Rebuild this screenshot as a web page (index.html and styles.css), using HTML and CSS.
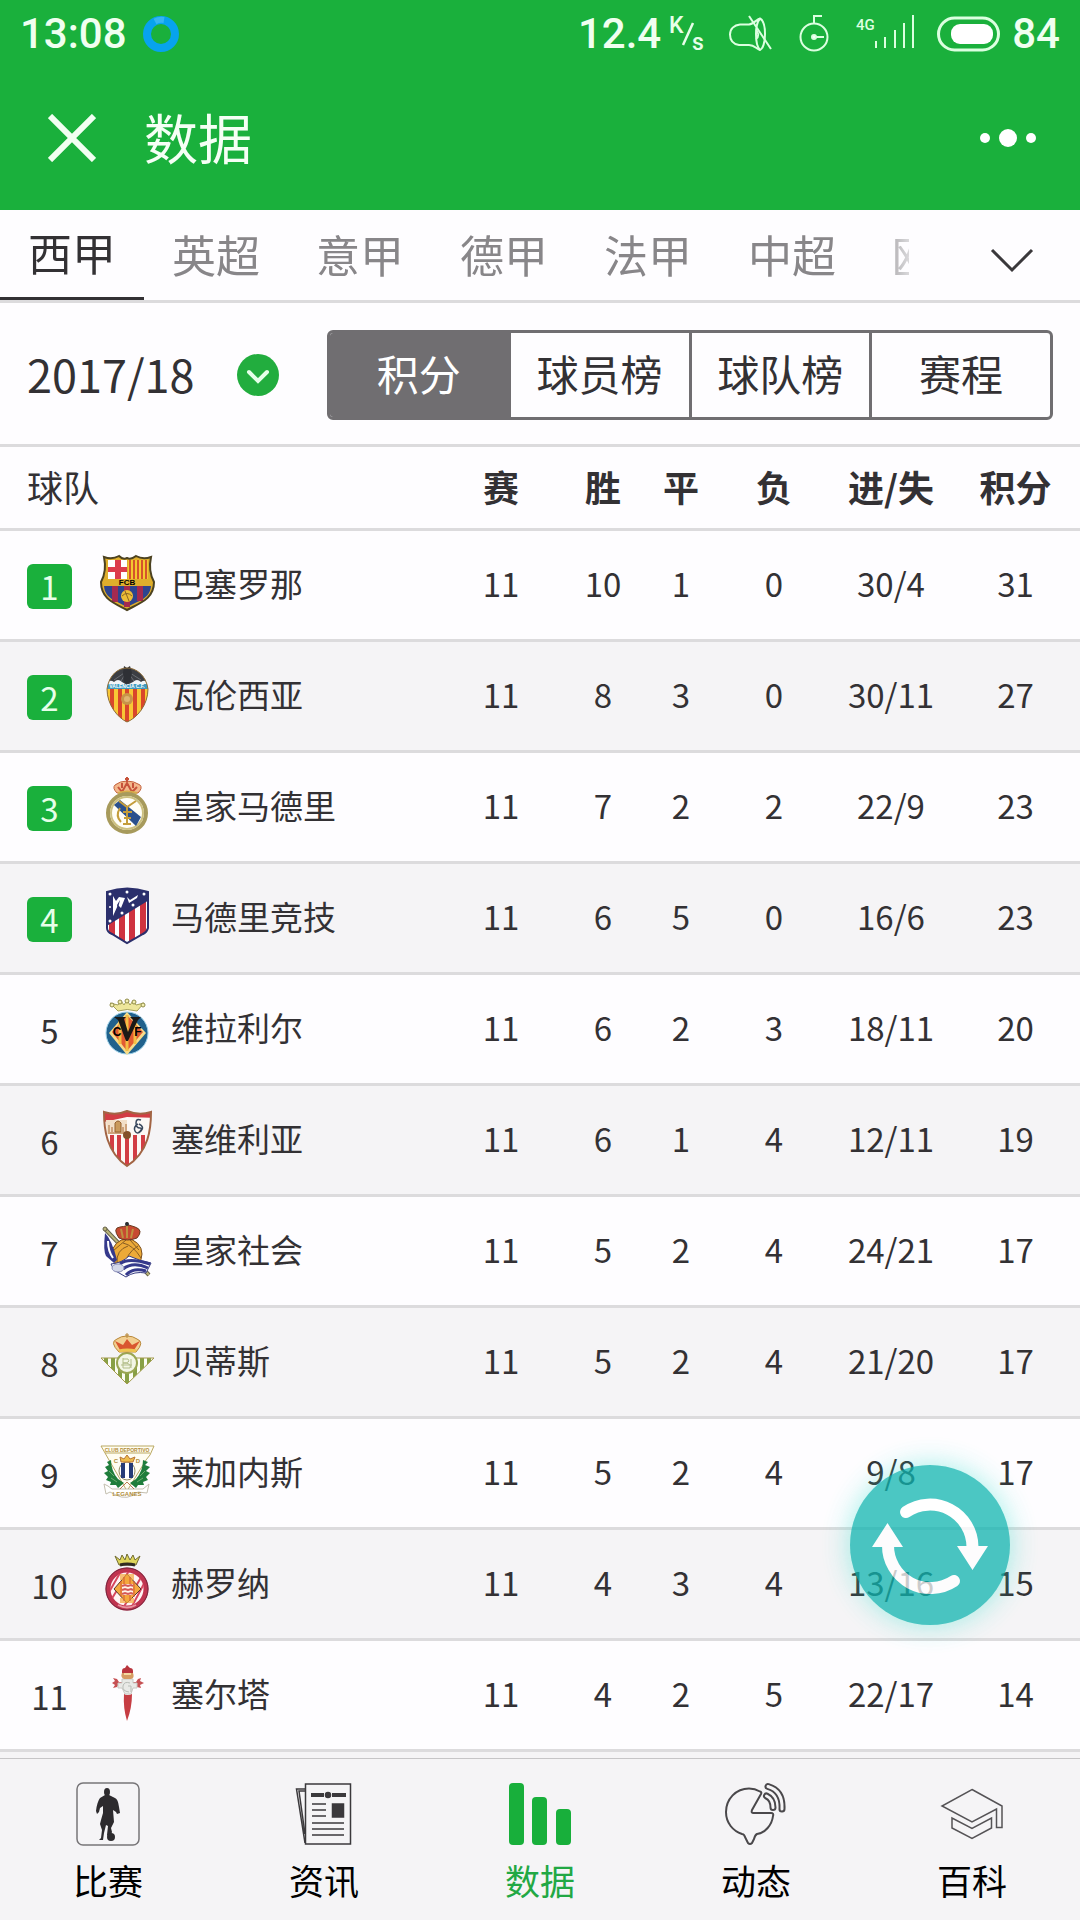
FILE: index.html
```html
<!DOCTYPE html>
<html lang="zh-CN">
<head>
  <meta charset="UTF-8" />
  <meta name="viewport" content="width=device-width, initial-scale=1" />
  <title>数据</title>
  <link rel="stylesheet" href="styles.css">
</head>
<body>

  <div class="status-bar">
    <span>13:08</span>
    <svg class="ring" width="38" height="38" viewBox="0 0 38 38"><circle cx="19" cy="19" r="14" fill="none" stroke="#07a3ee" stroke-width="8"/><path d="M13 6.500A14 14 0 0 1 22 5" fill="none" stroke="#35b5f2" stroke-width="6"/></svg>
    <div class="status-right">
      <div class="speed">
        <span>12.4</span>
        <svg width="38" height="48" viewBox="0 -6 38 48"><text x="0" y="17" class="unit">K</text><path d="M14 29 24 7" stroke="#e6ffe9" stroke-width="2.500"/><text x="23" y="34" class="unit">s</text></svg>
      </div>
      <svg width="44" height="38" viewBox="0 0 44 38" fill="none" stroke="#dcffe0" stroke-width="2"><path d="M20 30H10C4 29 1 25 1 19.500S5 10 11 9.500H20C25 9 28 4 31 3.500C34 5 36 11 36 19S34 34 31 35C27 34 26 30 20 30"/><path d="M31 3.500C28 7 27 12 27 19S28 32 31 35M20 1 42 34"/><path d="M27 15c3 2 3 7 0 9"/></svg>
      <svg width="38" height="38" viewBox="0 0 38 38" fill="none" stroke="#dcffe0" stroke-width="2"><circle cx="19" cy="22" r="13.500"/><path d="M19 9V1H27M19 22H29"/><circle cx="19" cy="22" r="2" fill="#fff"/></svg>
      <svg width="60" height="38" viewBox="0 0 60 38"><text x="1" y="15" class="net">4G</text><path d="M21 33V26M30 33V22M40 33V15M49 33V8M58 33V0" stroke="#dcffe0" stroke-width="2"/></svg>
      <div class="battery">
        <svg width="63" height="36" viewBox="0 0 63 36"><rect x="1.500" y="2" width="60" height="32" rx="16" fill="none" stroke="#dcffe0" stroke-width="3"/><rect x="14" y="8" width="42" height="20" rx="9" fill="#fff"/></svg>
        <span>84</span>
      </div>
    </div>
  </div>

  <header class="header">
    <button class="icon-btn" aria-label="关闭"><svg width="48" height="48" viewBox="0 0 48 48"><path d="M2 2 46 46M46 2 2 46" stroke="#f2fff2" stroke-width="6"/></svg></button>
    <h1>数据</h1>
    <button class="icon-btn" aria-label="更多"><svg width="56" height="20" viewBox="0 0 56 20" fill="#fff"><circle cx="5" cy="10" r="5"/><circle cx="28" cy="10" r="9"/><circle cx="51" cy="10" r="5"/></svg></button>
  </header>

  <nav class="leagues">
    <div class="tabs">
      <button class="tab active">西甲</button>
      <button class="tab">英超</button>
      <button class="tab">意甲</button>
      <button class="tab">德甲</button>
      <button class="tab">法甲</button>
      <button class="tab">中超</button>
      <button class="tab">欧冠</button>
    </div>
    <button class="expand" aria-label="展开"><svg width="44" height="26" viewBox="0 0 44 26"><path d="M2 2 22 22 42 2" fill="none" stroke="#3a383b" stroke-width="3"/></svg></button>
  </nav>

  <div class="filter">
    <label class="season">
      <select aria-label="赛季"><option>2017/18</option></select>
      <svg width="42" height="42" viewBox="0 0 42 42"><circle cx="21" cy="21" r="21" fill="#22ad3e"/><path d="M12 18 21 27 30 18" fill="none" stroke="#e6ffe9" stroke-width="4" stroke-linecap="round"/></svg>
    </label>
    <div class="segment">
      <button class="active">积分</button>
      <button>球员榜</button>
      <button>球队榜</button>
      <button>赛程</button>
    </div>
  </div>

  <table class="standings">
    <colgroup>
      <col><col class="c-played"><col class="c-win"><col class="c-draw"><col class="c-loss"><col class="c-goals"><col class="c-points">
    </colgroup>
    <thead>
      <tr><th>球队</th><th>赛</th><th>胜</th><th>平</th><th>负</th><th>进/失</th><th>积分</th></tr>
    </thead>
    <tbody>
      <tr>
        <td><div class="team"><span class="rank top">1</span>
          <svg class="crest" viewBox="0 0 56 56">
            <clipPath id="barca"><path d="M4 2Q12 5 19 1 23 5 27 3 31 5 36 1 43 5 51 2Q48 16 54 27C54 44 40 48 27 55C14 48 1 44 1 27Q7 16 4 2Z"/></clipPath>
            <g clip-path="url(#barca)">
              <path fill="#dfae2c" d="M0 0h56v56H0z"/>
              <path fill="#fff" d="M8 5h19v19H8z"/><path fill="#dc3c4b" d="M15 5h6v19h-6zM8 12h19v5H8z"/>
              <path fill="#f4c92f" d="M28 5h20v19H28z"/><path d="M30 5v19M34 5v19M38 5v19M42 5v19M46 5v19" stroke="#d5532c" stroke-width="2"/>
              <path fill="#2d448f" d="M4 31h47c-1 13-13 15-24 21C17 46 5 44 4 31z"/>
              <path d="M15 31v16M27 31v21M40 31v15" stroke="#a32a50" stroke-width="6"/>
            </g>
            <circle cx="27" cy="41" r="6" fill="#edbd36"/><path d="M22 41q5-5 10 0M25 36l4 10" fill="none" stroke="#8b6424"/>
            <path d="M4 2Q12 5 19 1 23 5 27 3 31 5 36 1 43 5 51 2Q48 16 54 27C54 44 40 48 27 55C14 48 1 44 1 27Q7 16 4 2Z" fill="none" stroke="#4c4221" stroke-width="2"/>
            <text x="27" y="30" class="crest-text fcb">FCB</text>
          </svg>巴塞罗那</div></td>
        <td>11</td><td>10</td><td>1</td><td>0</td><td>30/4</td><td>31</td>
      </tr>
      <tr>
        <td><div class="team"><span class="rank top">2</span>
          <svg class="crest" viewBox="0 0 56 56">
            <clipPath id="valencia"><path d="M7 23C9 9 18 2 27 2S46 9 48 23C48 39 37 52 27 56C18 52 7 39 7 23Z"/></clipPath>
            <g clip-path="url(#valencia)">
              <path fill="#f8c735" d="M0 0h56v56H0z"/>
              <path d="M12 22v34M20 22v34M27 22v34M35 22v34M43 22v34" stroke="#d9462b" stroke-width="4"/>
              <path fill="#f2f5f7" d="M0 0h56v18H0z"/><path fill="#3e9bc0" d="M0 18h56v5H0z"/>
              <path fill="#3c3e43" d="M0 0H56V17L48 17Q45 13 41 16 37 12 33 16L27 19 22 16Q18 12 14 16 10 13 7 17L0 17Z"/>
              <path d="M27 5 14 14M27 5 41 14M27 5 21 15M27 5 34 15" stroke="#6a6d73"/>
            </g>
            <path fill="#2e3035" d="M24 0 27 2 30 0 32 7 30 16 27 18 24 16 23 7Z"/>
            <circle cx="27" cy="33" r="6" fill="#c89448"/><circle cx="27" cy="33" r="3" fill="#e0b470"/>
            <path d="M7 23C9 9 18 2 27 2S46 9 48 23C48 39 37 52 27 56C18 52 7 39 7 23Z" fill="none" stroke="#8c6c3c"/>
            <text x="27" y="22" class="crest-text small white">VALENCIA C.F.</text>
          </svg>瓦伦西亚</div></td>
        <td>11</td><td>8</td><td>3</td><td>0</td><td>30/11</td><td>27</td>
      </tr>
      <tr>
        <td><div class="team"><span class="rank top">3</span>
          <svg class="crest" viewBox="0 0 56 56">
            <path d="M17 16Q12 11 15 8 20 4 27 4T40 8Q43 11 38 16Z" fill="#f3b78c" stroke="#c2623f"/><path d="M18 10 22 15 27 6 32 15 37 10M22 6v5M33 6v5M27 0v5M25 2h4" stroke="#c7533b" stroke-width="2" fill="none"/><path d="M18 16q9-3 19 0" stroke="#d6ad4a" stroke-width="2" fill="none"/>
            <circle cx="27" cy="36" r="19" fill="#fffef7" stroke="#a79a5c" stroke-width="4"/><circle cx="27" cy="36" r="16" fill="none" stroke="#ccc080" stroke-width="2"/>
            <path d="M14 28 20 23 41 40 36 49Z" fill="#2a508d"/>
            <path d="M19 24 27 30 36 24M27 30v18M23 47h8M23 35h9M24 41h7M20 31q-5 8 1 14" fill="none" stroke="#c49d3b" stroke-width="2"/>
          </svg>皇家马德里</div></td>
        <td>11</td><td>7</td><td>2</td><td>2</td><td>22/9</td><td>23</td>
      </tr>
      <tr>
        <td><div class="team"><span class="rank top">4</span>
          <svg class="crest" viewBox="0 0 56 56">
            <clipPath id="atleti"><path d="M7 4Q27-3 48 4V40Q47 44 43 46L27 55 12 46Q7 44 7 40Z"/></clipPath>
            <g clip-path="url(#atleti)">
              <path fill="#fff" d="M0 0h56v56H0z"/>
              <path d="M12 20v36M22 20v36M32 10v46M43 10v46" stroke="#cf3340" stroke-width="6"/>
              <path fill="#2b2f6c" d="M0 0h56v8L0 42z"/>
            </g>
            <path d="M13 28 13 8 16 13 19 9 25 10 21 20 18 17ZM27 9 30 12 38 7 37 10 29 15Z" fill="#fff"/>
            <path d="M17 17 20 12 18 20Z" fill="#2b2f6c"/>
            <g fill="#fff"><circle cx="27" cy="4" r="1.500"/><circle cx="10" cy="6" r="1.500"/><circle cx="44" cy="6" r="1.500"/><circle cx="33" cy="17" r="1.500"/><circle cx="22" cy="25" r="1.500"/><circle cx="10" cy="33" r="1.500"/><circle cx="10" cy="19" r="1"/></g>
            <path d="M7 4Q27-3 48 4V40Q47 44 43 46L27 55 12 46Q7 44 7 40Z" fill="none" stroke="#2b2f6c" stroke-width="2"/>
          </svg>马德里竞技</div></td>
        <td>11</td><td>6</td><td>5</td><td>0</td><td>16/6</td><td>23</td>
      </tr>
      <tr>
        <td><div class="team"><span class="rank">5</span>
          <svg class="crest" viewBox="0 0 56 56">
            <circle cx="27" cy="34" r="21" fill="#21618c" stroke="#9cd0e8"/>
            <path d="M27 13 46 34 27 56 9 34Z" fill="#f6dc8b"/><path d="M27 16 43 33 27 52 12 33Z" fill="#e35b32"/><path d="M27 16v36M20 22v23M35 22v23" stroke="#f4bf45" stroke-width="3"/>
            <path d="M18 12Q27 9 37 12L44 4 36 6 33 2 30 6 27 1 24 6 21 2 18 6 10 4Z" fill="#ede69b" stroke="#a4a057"/>
            <g fill="#f3eeb0" stroke="#8e8a48"><circle cx="12" cy="6" r="2"/><circle cx="20" cy="3" r="2"/><circle cx="27" cy="2" r="2"/><circle cx="34" cy="3" r="2"/><circle cx="43" cy="6" r="2"/></g>
            <path d="M14 18h12l-2 2 4 13 5-12-3-3h11l-3 3-10 21h-2L18 21z" fill="#1b1916"/>
            <text x="17" y="37" class="crest-text cvf">C</text><text x="38" y="37" class="crest-text cvf">F</text>
          </svg>维拉利尔</div></td>
        <td>11</td><td>6</td><td>2</td><td>3</td><td>18/11</td><td>20</td>
      </tr>
      <tr>
        <td><div class="team"><span class="rank">6</span>
          <svg class="crest" viewBox="0 0 56 56">
            <clipPath id="sevilla"><path d="M4 2Q16 6 27 1 39 6 51 2C51 18 49 42 27 56C6 42 4 18 4 2Z"/></clipPath>
            <g clip-path="url(#sevilla)">
              <path fill="#fcf8f5" d="M0 0h56v56H0z"/><path fill="#d23d44" d="M0 0h56v8L27 7 0 13z"/>
              <path d="M12 25v31M19 25v31M27 25v31M35 25v31M43 25v31" stroke="#d23d44" stroke-width="4"/>
              <path d="M6 10h21v14H7z" fill="#f2dfc8"/>
            </g>
            <path d="M9 22v-7M12 22v-5M23 22v-5M26 21v-7M8 23h17" stroke="#a9672f"/>
            <path d="M15 13q3-4 6 0v9h-6z" fill="#c99a5c" stroke="#94602f"/>
            <path d="M41 10q-5-2-5 3t4 5-2 5M38 14q-5 3-3 7t6 0-2-7" fill="none" stroke="#38475c" stroke-width="1.500"/>
            <circle cx="27" cy="25" r="4" fill="#84512b"/>
            <path d="M4 2Q16 6 27 1 39 6 51 2C51 18 49 42 27 56C6 42 4 18 4 2Z" fill="none" stroke="#a26444" stroke-width="2"/>
          </svg>塞维利亚</div></td>
        <td>11</td><td>6</td><td>1</td><td>4</td><td>12/11</td><td>19</td>
      </tr>
      <tr>
        <td><div class="team"><span class="rank">7</span>
          <svg class="crest" viewBox="0 0 56 56">
            <path d="M5 8 49 54" stroke="#656048" stroke-width="4"/><path d="M5 8 49 54" stroke="#b9b479" stroke-width="2"/><circle cx="5" cy="8" r="2" fill="#b9b479" stroke="#656048"/>
            <circle cx="27" cy="33" r="15" fill="#ecaa38" stroke="#7b4f20"/>
            <path d="M13 30q8-7 13-11M17 42q-1-13 11-17M26 45q-1-12 12-20M23 22q10 2 18 15M30 19l9 10" fill="none" stroke="#865c24"/>
            <path d="M19 17Q12 7 20 6T27 4 35 6 37 17Q27 21 19 17Z" fill="#c74a31" stroke="#6b3b20"/><path d="M27 1v16M21 8l2 9M33 8l-2 9" stroke="#bf9140" stroke-width="2"/><circle cx="27" cy="3" r="2" fill="#272c32"/>
            <path d="M5 12Q3 30 6 35L14 42 17 39Q12 19 5 12Z" fill="#35398c"/><path d="M8 20Q8 30 13 37" fill="none" stroke="#fff" stroke-width="2"/>
            <path d="M11 43Q22 42 29 35 40 40 51 42L46 52Q34 50 26 56L14 49Z" fill="#fff" stroke="#373c82"/>
            <path d="M20 43Q28 36 50 43M23 48Q33 40 48 47M26 54Q33 46 46 50" fill="none" stroke="#35398c" stroke-width="3"/><ellipse cx="18" cy="47" rx="6" ry="4" fill="#d4d8ea" stroke="#8a8eb7"/>
          </svg>皇家社会</div></td>
        <td>11</td><td>5</td><td>2</td><td>4</td><td>24/21</td><td>17</td>
      </tr>
      <tr>
        <td><div class="team"><span class="rank">8</span>
          <svg class="crest" viewBox="0 0 56 56">
            <clipPath id="betis"><path d="M1 26H54L27 52Z"/></clipPath>
            <g clip-path="url(#betis)"><path fill="#fcfdf4" d="M0 20h56v36H0z"/><path d="M6 24v30M13 24v30M20 24v30M27 24v30M35 24v30M42 24v30M49 24v30" stroke="#88a045" stroke-width="4"/></g>
            <path d="M1 26H54L27 52Z" fill="none" stroke="#a39a4d"/>
            <circle cx="27" cy="31" r="10" fill="#f3f6e6" stroke="#9aa653" stroke-width="2"/><path d="M23 26v10M23 27h5q3 4-5 4 9 0 7 5h-7M31 27v9M21 33h11" stroke="#b2bd89" fill="none"/>
            <path d="M19 20Q9 10 17 7 21 4 27 4T37 7Q45 10 36 20Z" fill="#f2cf91" stroke="#b88739"/><path d="M20 18 15 9 23 13 27 7 32 13 40 9 34 18Z" fill="#d9562f"/><path d="M27 1v5M25 3h4" stroke="#b88739"/><path d="M19 19q8-2 17 0" stroke="#edc551" stroke-width="3" fill="none"/>
          </svg>贝蒂斯</div></td>
        <td>11</td><td>5</td><td>2</td><td>4</td><td>21/20</td><td>17</td>
      </tr>
      <tr>
        <td><div class="team"><span class="rank">9</span>
          <svg class="crest" viewBox="0 0 56 56">
            <path d="M1 3H54L50 12 46 17 27 48 9 17 5 10Z" fill="#fffdf2" stroke="#bba963"/><path d="M5 10H50" stroke="#bba963"/>
            <path d="M4 41 8 43 12 46 43 46 49 41 47 50 38 49Q27 58 16 52L10 49 6 51Z" fill="#fff" stroke="#c4bfb0"/>
            <g fill="#1f7d3c"><path d="M11 17 7 19 9 22 5 24 8 28 4 30 8 34 6 37 11 39 10 42 16 42 18 45 24 40 18 36Q11 28 11 17Z"/><path d="M43 17 48 19 45 22 50 24 46 28 50 30 46 34 48 37 43 39 44 42 38 42 36 45 30 40 36 36Q43 28 43 17Z"/></g>
            <path d="M9 28l5 5M11 35l6 4M45 28l-5 5M43 35l-6 4" stroke="#6dae70"/>
            <ellipse cx="27" cy="28" rx="8" ry="9" fill="#fff" stroke="#8f8960"/><path d="M23 20v15M31 20v15" stroke="#263b78" stroke-width="4"/>
            <path d="M21 19 20 14 24 16 27 12 30 16 35 14 33 19Z" fill="#edbc4c" stroke="#b87537"/><path d="M27 39 20 46M27 39 34 46" stroke="#bb7c54"/>
            <text x="27" y="9" class="crest-text small gold">CLUB DEPORTIVO</text><text x="16" y="20" class="crest-text gold">C</text><text x="38" y="20" class="crest-text gold">D</text><text x="27" y="53" class="crest-text gold">LEGANES</text>
          </svg>莱加内斯</div></td>
        <td>11</td><td>5</td><td>2</td><td>4</td><td>9/8</td><td>17</td>
      </tr>
      <tr>
        <td><div class="team"><span class="rank">10</span>
          <svg class="crest" viewBox="0 0 56 56">
            <path d="M19 11 15 2 20 6 22 1 25 6 27 0 30 6 33 1 35 6 40 2 36 11Z" fill="#dfd65b" stroke="#716c32"/><path d="M20 11q7-2 15 0" stroke="#302b22" stroke-width="3" fill="none"/>
            <circle cx="27" cy="35" r="19" fill="#fff4f4" stroke="#c03450" stroke-width="5"/>
            <clipPath id="girona"><circle cx="27" cy="35" r="17"/></clipPath>
            <g clip-path="url(#girona)"><path d="M5 32 15 12M8 40 24 12M11 46 32 12M22 56 43 20M29 58 47 24M36 58 52 28" stroke="#d7485f" stroke-width="2"/></g>
            <path d="M27 20 41 35 27 49 14 35Z" fill="#f4a83e" stroke="#56362c"/><path d="M20 20h14v6H20zM20 44h14v5H20z" fill="#f4a83e" opacity=".7"/><path d="M21 27v16M24 23v24M30 23v24M34 27v16" stroke="#d55630"/><path d="M22 30h11v11H22z" fill="#fff4e9"/><path d="M22 32l3-1 3 1 3-1 2 1M22 36l3-1 3 1 3-1 2 1M22 40l3-1 3 1 3-1 2 1" stroke="#d55a58" fill="none" stroke-width="2"/>
            <path d="M18 51q9 5 18 0" fill="none" stroke="#e893a0" stroke-width="2"/>
            <circle cx="27" cy="35" r="21" fill="none" stroke="#762940"/>
          </svg>赫罗纳</div></td>
        <td>11</td><td>4</td><td>3</td><td>4</td><td>13/16</td><td>15</td>
      </tr>
      <tr>
        <td><div class="team"><span class="rank">11</span>
          <svg class="crest" viewBox="0 0 56 56">
            <path d="M24 29Q27 31 32 29 32 43 27 56 23 43 24 29Z" fill="#c63d43"/>
            <path d="M12 18 15 16 13 13 17 14 19 17 36 17 38 14 41 13 40 16 44 18 40 20 41 23 37 22 35 19H19L17 22 13 23 15 20Z" fill="#c65053"/>
            <path d="M22 14h11v4h4v5h-4l-2 6h-6l-3-6h-4v-5h4z" fill="#e9eae7" stroke="#c8cac5"/><path d="M30 18q-6-2-7 3t6 6M28 21h3v6" stroke="#b9bdb7" fill="none"/>
            <path d="M22 6Q22 3 25 3L27 0 30 3Q33 3 33 6V9H22Z" fill="#b9343d"/><path d="M22 8h11q2 5-2 6h-7q-4-2-2-6z" fill="#d69c62"/><path d="M24 9h7" stroke="#f3d9a0" stroke-width="2"/>
          </svg>塞尔塔</div></td>
        <td>11</td><td>4</td><td>2</td><td>5</td><td>22/17</td><td>14</td>
      </tr>
    </tbody>
  </table>

  <button class="refresh" aria-label="刷新">
    <svg width="160" height="160" viewBox="0 0 160 160">
      <g fill="none" stroke="#fff" stroke-width="12" stroke-linecap="round"><path d="M56 47A42.500 42.500 0 0 1 122.500 82"/><path d="M104 116A42.500 42.500 0 0 1 38 80"/></g>
      <path d="M107 81H138L122.500 105ZM22 82H53L37.500 58Z" fill="#fff"/>
    </svg>
  </button>

  <nav class="bottom-nav">
    <a href="#match">
      <svg width="64" height="64" viewBox="0 0 64 64"><rect x="1" y="1" width="62" height="62" rx="6" fill="none" stroke="#777578" stroke-width="1.500"/><g fill="#2d2b2e"><ellipse cx="31" cy="10" rx="3" ry="4"/><path d="M29 13 24 16Q21 20 20 29L21 32 23 30 24 26 27 24 27 31 25 38 24 42 26 48 25 56 23 58 27 58 28 51 30 43 32 44 31 53 34 56 36 50 35 46 38 40 37 28 40 30 41 32 44 31 43 25Q42 17 39 16L33 13Z"/><circle cx="35" cy="55" r="4"/></g></svg>
      <span>比赛</span>
    </a>
    <a href="#news">
      <svg width="64" height="64" viewBox="0 0 64 64" fill="none" stroke="#3b393c" stroke-width="1.500"><rect x="13.500" y="2" width="45" height="60"/><path d="M13 7H4.500L13 61M13 9H7L13 52"/><path d="M19 13H32M40 13H54" stroke-width="4"/><circle cx="36" cy="13" r="2.500" fill="#3b393c"/><path d="M20 22H34M20 28H34M20 34H34M20 41H52M20 47H52M20 53H52"/><rect x="40.500" y="22" width="11" height="13" fill="#3b393c"/></svg>
      <span>资讯</span>
    </a>
    <a href="#data" class="active">
      <svg width="64" height="64" viewBox="0 0 64 64" fill="#18af3b"><rect x="1" y="1" width="15" height="62" rx="4"/><rect x="24" y="15" width="15" height="48" rx="4"/><rect x="48" y="27" width="15" height="36" rx="4"/></svg>
      <span>数据</span>
    </a>
    <a href="#feed">
      <svg width="64" height="64" viewBox="0 0 64 64" fill="none" stroke="#4a484b" stroke-width="2" stroke-linejoin="round" stroke-linecap="round"><path d="M36 9.500Q38 10 37 12L28 28Q27 31 29 31H47Q50 31 49 34C48 43 41 51 33 52Q31 53 30 57L28 61Q26 63 24 61L21 55Q20 52 18 52C9 49 2 41 2 30C2 17 12 6.500 25 6.500Q31 6.500 36 9.500Z"/><path d="M44 4.500Q59 9 58 27M42.500 14Q49 17 49 25.500" stroke-width="7"/><path d="M44 4.500Q59 9 58 27M42.500 14Q49 17 49 25.500" stroke="#f5f4f6" stroke-width="3"/></svg>
      <span>动态</span>
    </a>
    <a href="#wiki">
      <svg width="64" height="64" viewBox="0 0 64 64" fill="none" stroke="#555356" stroke-width="1.500"><path d="M32 7.500 62 24V45.500H56.500V27L32 40 2 24ZM12 36V46L32 56.500 51.500 46V36L32 46.500Z"/></svg>
      <span>百科</span>
    </a>
  </nav>

</body>
</html>
```
FILE: styles.css
```css
* {
  box-sizing: border-box;
}
body {
  margin: 0;
  min-height: 100vh;
  display: flex;
  flex-direction: column;
  background: #f5f4f6;
  color: #333134;
  font-family: "Noto Sans CJK SC", sans-serif;
}
button {
  padding: 0;
  border: none;
  background: none;
  color: inherit;
  font-family: inherit;
  cursor: pointer;
}
svg {
  display: block;
  flex: none;
}
.status-bar {
  display: flex;
  align-items: center;
  height: 66px;
  padding: 2px 20px 0;
  background: #1ab03c;
  color: #f0fff0;
  font-family: Roboto, sans-serif;
  font-size: 42px;
  font-weight: 500;
  line-height: 48px;
}
.ring {
  margin-left: 15px;
}
.status-right {
  display: flex;
  align-items: center;
  gap: 22px;
  margin-left: auto;
}
.speed {
  display: flex;
  align-items: center;
  gap: 8px;
}
.battery {
  display: flex;
  align-items: center;
  gap: 12px;
}
.unit {
  font-size: 23px;
  fill: #e6ffe9;
}
.net {
  font-size: 15px;
  fill: #dcffe0;
}
.header {
  display: flex;
  align-items: center;
  height: 144px;
  padding: 0 44px 0 48px;
  background: #1ab03c;
  color: #f5fff5;
}
.header h1 {
  flex: 1;
  margin: 0 0 2px 48px;
  font-size: 54px;
  font-weight: 400;
  line-height: 72px;
}
.leagues {
  display: flex;
  height: 93px;
  border-bottom: 3px solid #dcdbdd;
  background: #fefdff;
}
.tabs {
  display: flex;
  flex: 1;
  overflow: hidden;
  -webkit-mask-image: linear-gradient(to right, #000 calc(100% - 36px), rgba(0, 0, 0, 0.3));
  mask-image: linear-gradient(to right, #000 calc(100% - 36px), rgba(0, 0, 0, 0.3));
}
.tab {
  flex: 0 0 144px;
  height: 90px;
  padding-bottom: 3px;
  color: #888689;
  font-size: 44px;
  line-height: 60px;
}
.tab.active {
  border-bottom: 3px solid #333134;
  color: #333134;
}
.expand {
  display: flex;
  align-items: center;
  justify-content: center;
  width: 171px;
  padding-top: 11px;
  padding-left: 34px;
}
.filter {
  display: flex;
  align-items: center;
  gap: 48px;
  height: 144px;
  padding: 3px 27px 0;
  border-bottom: 3px solid #dcdbdd;
  background: #fefdff;
}
.season {
  display: flex;
  align-items: center;
  gap: 42px;
}
.season select {
  appearance: none;
  padding: 0 0 2px;
  border: none;
  background: none;
  color: inherit;
  font-family: inherit;
  font-size: 45px;
  line-height: 60px;
}
.segment {
  display: flex;
  flex: 1;
  height: 90px;
  border: 3px solid #706e71;
  border-radius: 6px;
  overflow: hidden;
}
.segment button {
  flex: 1;
  padding-bottom: 4px;
  font-size: 42px;
  line-height: 60px;
}
.segment button + button {
  border-left: 3px solid #706e71;
}
.segment .active {
  background: #706e71;
  color: #fff;
}
.standings {
  width: 100%;
  table-layout: fixed;
  border-spacing: 0;
  background: #fefdff;
  font-size: 33px;
  line-height: 48px;
}
.c-played, .c-goals {
  width: 114px;
}
.c-win {
  width: 90px;
}
.c-draw {
  width: 66px;
}
.c-loss {
  width: 120px;
}
.c-points {
  width: 132px;
}
.standings th {
  height: 84px;
  padding: 0 0 4px;
  border-bottom: 3px solid #dcdbdd;
  font-size: 36px;
  font-weight: 700;
  white-space: nowrap;
}
.standings th:first-child {
  padding-left: 27px;
  font-weight: 400;
  text-align: left;
}
.standings td {
  height: 111px;
  padding: 0 0 4px;
  border-bottom: 3px solid #dcdbdd;
  text-align: center;
}
.standings th:last-child, .standings td:last-child {
  padding-left: 3px;
}
.standings tbody tr:nth-child(even) {
  background: #f5f4f6;
}
.team {
  display: flex;
  align-items: center;
  padding-left: 27px;
}
.rank {
  width: 45px;
  height: 45px;
  margin: 6px 28px 0 0;
  border-radius: 6px;
  line-height: 45px;
}
.rank.top {
  background: #1ab03c;
  color: #e6ffe9;
}
.crest {
  width: 56px;
  height: 56px;
  margin-right: 15px;
  overflow: visible;
}
.crest-text {
  font-family: "Liberation Sans", sans-serif;
  font-size: 6px;
  font-weight: 700;
  text-anchor: middle;
}
.fcb {
  font-size: 8px;
}
.cvf {
  font-size: 12px;
}
.small {
  font-size: 5px;
}
.white {
  fill: #fff;
}
.gold {
  fill: #b18c37;
}
.refresh {
  position: fixed;
  right: 70px;
  bottom: 295px;
  width: 160px;
  height: 160px;
  border-radius: 50%;
  background: #0fb4af;
  box-shadow: 0 0 28px rgba(50, 225, 205, 0.6);
  opacity: 0.75;
}
.bottom-nav {
  display: flex;
  height: 162px;
  margin-top: auto;
  border-top: 1px solid #c6c5c7;
}
.bottom-nav a {
  display: flex;
  flex: 1;
  flex-direction: column;
  align-items: center;
  gap: 10px;
  padding-top: 23px;
  color: #000;
  font-size: 35px;
  line-height: 48px;
  text-decoration: none;
}
.bottom-nav .active {
  color: #22a844;
}
```
